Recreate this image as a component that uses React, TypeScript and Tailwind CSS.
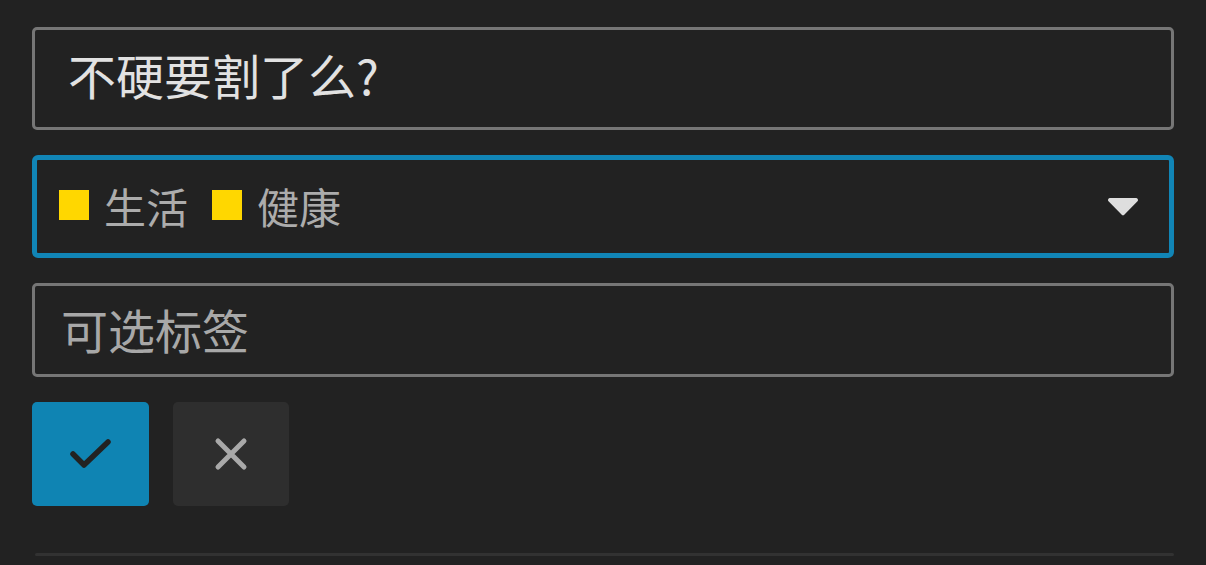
import * as React from "react";

const font = { fontFamily: '"Noto Sans CJK SC", "Noto Sans", sans-serif' };

function Tag({ label }: { label: string }) {
  return (
    <span className="flex items-center gap-[15px]">
      <span className="h-[30px] w-[30px] bg-[#ffd700]" />
      <span>{label}</span>
    </span>
  );
}

export default function App() {
  const [title, setTitle] = React.useState("不硬要割了么?");
  const [extra, setExtra] = React.useState("");

  return (
    <div className="h-[565px] w-[1206px] overflow-hidden bg-[#222222] px-8 pt-[27px]" style={font}>
      <div className="flex flex-col gap-[25px]">
        <input
          value={title}
          onChange={(e) => setTitle(e.target.value)}
          className="h-[103px] w-full rounded-[5px] border-[3px] border-[#767676] bg-transparent px-[33px] pb-[9px] text-[48px] text-[#e2e2e2] outline-none"
          style={font}
        />

        <div className="flex h-[103px] items-center justify-between rounded-[6px] border-[5px] border-[#1185b6] pb-[3px] pl-[22px] pr-[30px] text-[42px] text-[#acacac]">
          <div className="flex items-center gap-[24px]">
            <Tag label="生活" />
            <Tag label="健康" />
          </div>
          <svg width="32" height="19" viewBox="0 0 32 19" className="mt-[3px]">
            <path d="M3 1h26a2 2 0 0 1 1.5 3.3L17.5 17.5a2 2 0 0 1-3 0L1.5 4.3A2 2 0 0 1 3 1z" fill="#dedede" />
          </svg>
        </div>

        <input
          value={extra}
          onChange={(e) => setExtra(e.target.value)}
          placeholder="可选标签"
          className="h-[94px] w-full rounded-[5px] border-[3px] border-[#767676] bg-transparent px-[26px] pb-[4px] text-[47px] text-[#e2e2e2] placeholder:text-[#a8a8a8] outline-none"
          style={font}
        />

        <div className="flex gap-[24px]">
          <button className="flex h-[104px] w-[117px] items-center justify-center rounded-[5px] bg-[#0f84b3]">
            <svg width="44" height="32" viewBox="0 0 44 32">
              <path d="M4 16l11 11L39 4" fill="none" stroke="#222222" strokeWidth="5.5" strokeLinecap="round" strokeLinejoin="round" />
            </svg>
          </button>
          <button className="flex h-[104px] w-[116px] items-center justify-center rounded-[5px] bg-[#2e2e2e]">
            <svg width="34" height="34" viewBox="0 0 34 34">
              <path d="M4 4l26 26M30 4L4 30" fill="none" stroke="#a9a9a9" strokeWidth="5" strokeLinecap="round" />
            </svg>
          </button>
        </div>
      </div>

      <div className="ml-[3px] mt-[47px] h-[3px] rounded-full bg-[#323232]" />
    </div>
  );
}
